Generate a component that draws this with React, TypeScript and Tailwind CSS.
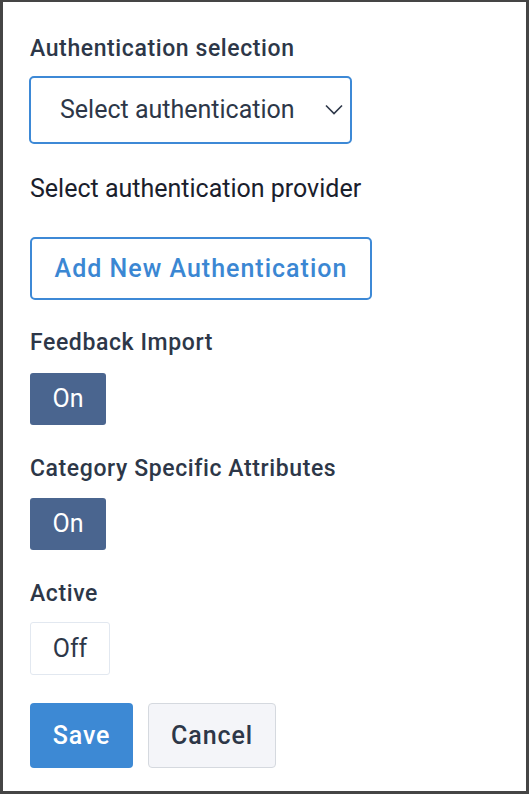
import React from "react";

const label = "text-[23px] leading-[28px] font-medium tracking-[0.6px] text-[#2d3748]";

export default function App() {
  return (
    <div
      className="w-[529px] h-[794px] bg-white border-[3px] border-t-2 border-[#454545] text-[#2d3748] overflow-hidden"
      style={{ fontFamily: "Roboto, 'Liberation Sans', sans-serif" }}
    >
      <div className="pl-[27px] pt-[33px] flex flex-col items-start">
        <label className={label}>Authentication selection</label>
        <div className="mt-[13px] -ml-[1px] w-[323px] h-[68px] border-2 border-[#3d89d6] rounded-[5px] flex items-center justify-between pl-[29px] pr-[7px]">
          <span className="text-[25px] leading-[30px] text-[#2d3748]">Select authentication</span>
          <svg width="18" height="12" viewBox="0 0 18 12" fill="none" className="-mt-[1px]">
            <path d="M1 1.5l8 8 8-8" stroke="#2d3748" strokeWidth="1.6" />
          </svg>
        </div>
        <p className="mt-[30px] text-[25px] leading-[30px] text-[#1a202c]">
          Select authentication provider
        </p>
        <button className="mt-[33px] w-[342px] h-[63px] border-2 border-[#3d89d6] rounded-[5px] text-[25px] font-medium tracking-[1px] text-[#3b87d3]">
          Add New Authentication
        </button>
        <label className={`mt-[29px] ${label}`}>Feedback Import</label>
        <button className="mt-[16px] w-[76px] h-[52px] bg-[#4a658f] rounded-[3px] text-[25px] text-white">
          On
        </button>
        <label className={`mt-[30px] ${label}`}>Category Specific Attributes</label>
        <button className="mt-[15px] w-[76px] h-[52px] bg-[#4a658f] rounded-[3px] text-[25px] text-white">
          On
        </button>
        <label className={`mt-[30px] ${label}`}>Active</label>
        <button className="mt-[14px] w-[80px] h-[53px] bg-white border border-[#e2e8f0] rounded-[3px] text-[25px] text-[#2d3748]">
          Off
        </button>
        <div className="mt-[28px] flex gap-[15px]">
          <button className="w-[103px] h-[65px] bg-[#3d89d4] rounded-[4px] text-[25px] font-medium tracking-[0.9px] text-white">
            Save
          </button>
          <button className="w-[128px] h-[65px] bg-[#f4f5f9] border border-[#d5d9df] rounded-[4px] text-[25px] font-medium tracking-[0.9px] text-[#2d3748]">
            Cancel
          </button>
        </div>
      </div>
    </div>
  );
}
